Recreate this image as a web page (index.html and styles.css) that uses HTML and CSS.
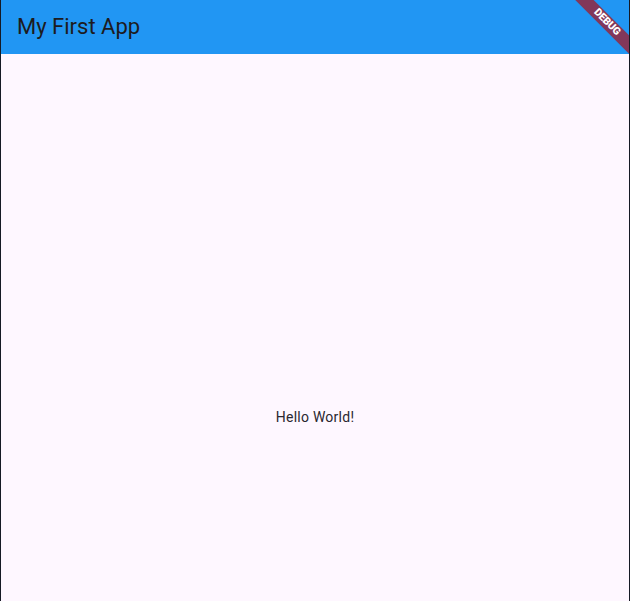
FILE: index.html
```html
<!DOCTYPE html>
<html>
<head>
<meta charset="utf-8">
<link rel="stylesheet" href="styles.css">
</head>
<body>
<div class="frame">
  <header class="appbar">
    <h1 class="title">My First App</h1>
  </header>
  <main class="content">
    <p class="hello">Hello World!</p>
  </main>
  <div class="banner-anchor">
    <div class="banner">DEBUG</div>
  </div>
</div>
</body>
</html>
```
FILE: styles.css
```css
html, body {
  margin: 0;
  padding: 0;
  height: 100%;
  background: #151a24;
}
.frame {
  position: relative;
  margin: 0 1px;
  height: 601px;
  display: flex;
  flex-direction: column;
  background: #fef7ff;
  overflow: hidden;
  font-family: Roboto, "Noto Sans", sans-serif;
}
.appbar {
  height: 54px;
  flex: none;
  background: #2196f3;
  display: flex;
  align-items: center;
  padding-left: 16px;
}
.title {
  margin: 0;
  font-size: 22px;
  font-weight: 400;
  color: #1d1b20;
  line-height: 28px;
}
.content {
  flex: 1;
  padding-top: 355px;
}
.hello {
  margin: 0;
  text-align: center;
  font-size: 14px;
  line-height: 16px;
  letter-spacing: 0.25px;
  color: #2a2730;
}
.banner-anchor {
  position: absolute;
  top: 0;
  right: 0;
  width: 0;
  height: 0;
}
.banner {
  position: absolute;
  left: -40px;
  top: 25px;
  width: 80px;
  height: 13px;
  transform-origin: 40px -25px;
  transform: rotate(45deg);
  background: rgba(172, 14, 24, 0.7);
  color: #fff;
  font-size: 10.5px;
  font-weight: 900;
  line-height: 12px;
  text-align: center;
  letter-spacing: -0.2px;
}
```
